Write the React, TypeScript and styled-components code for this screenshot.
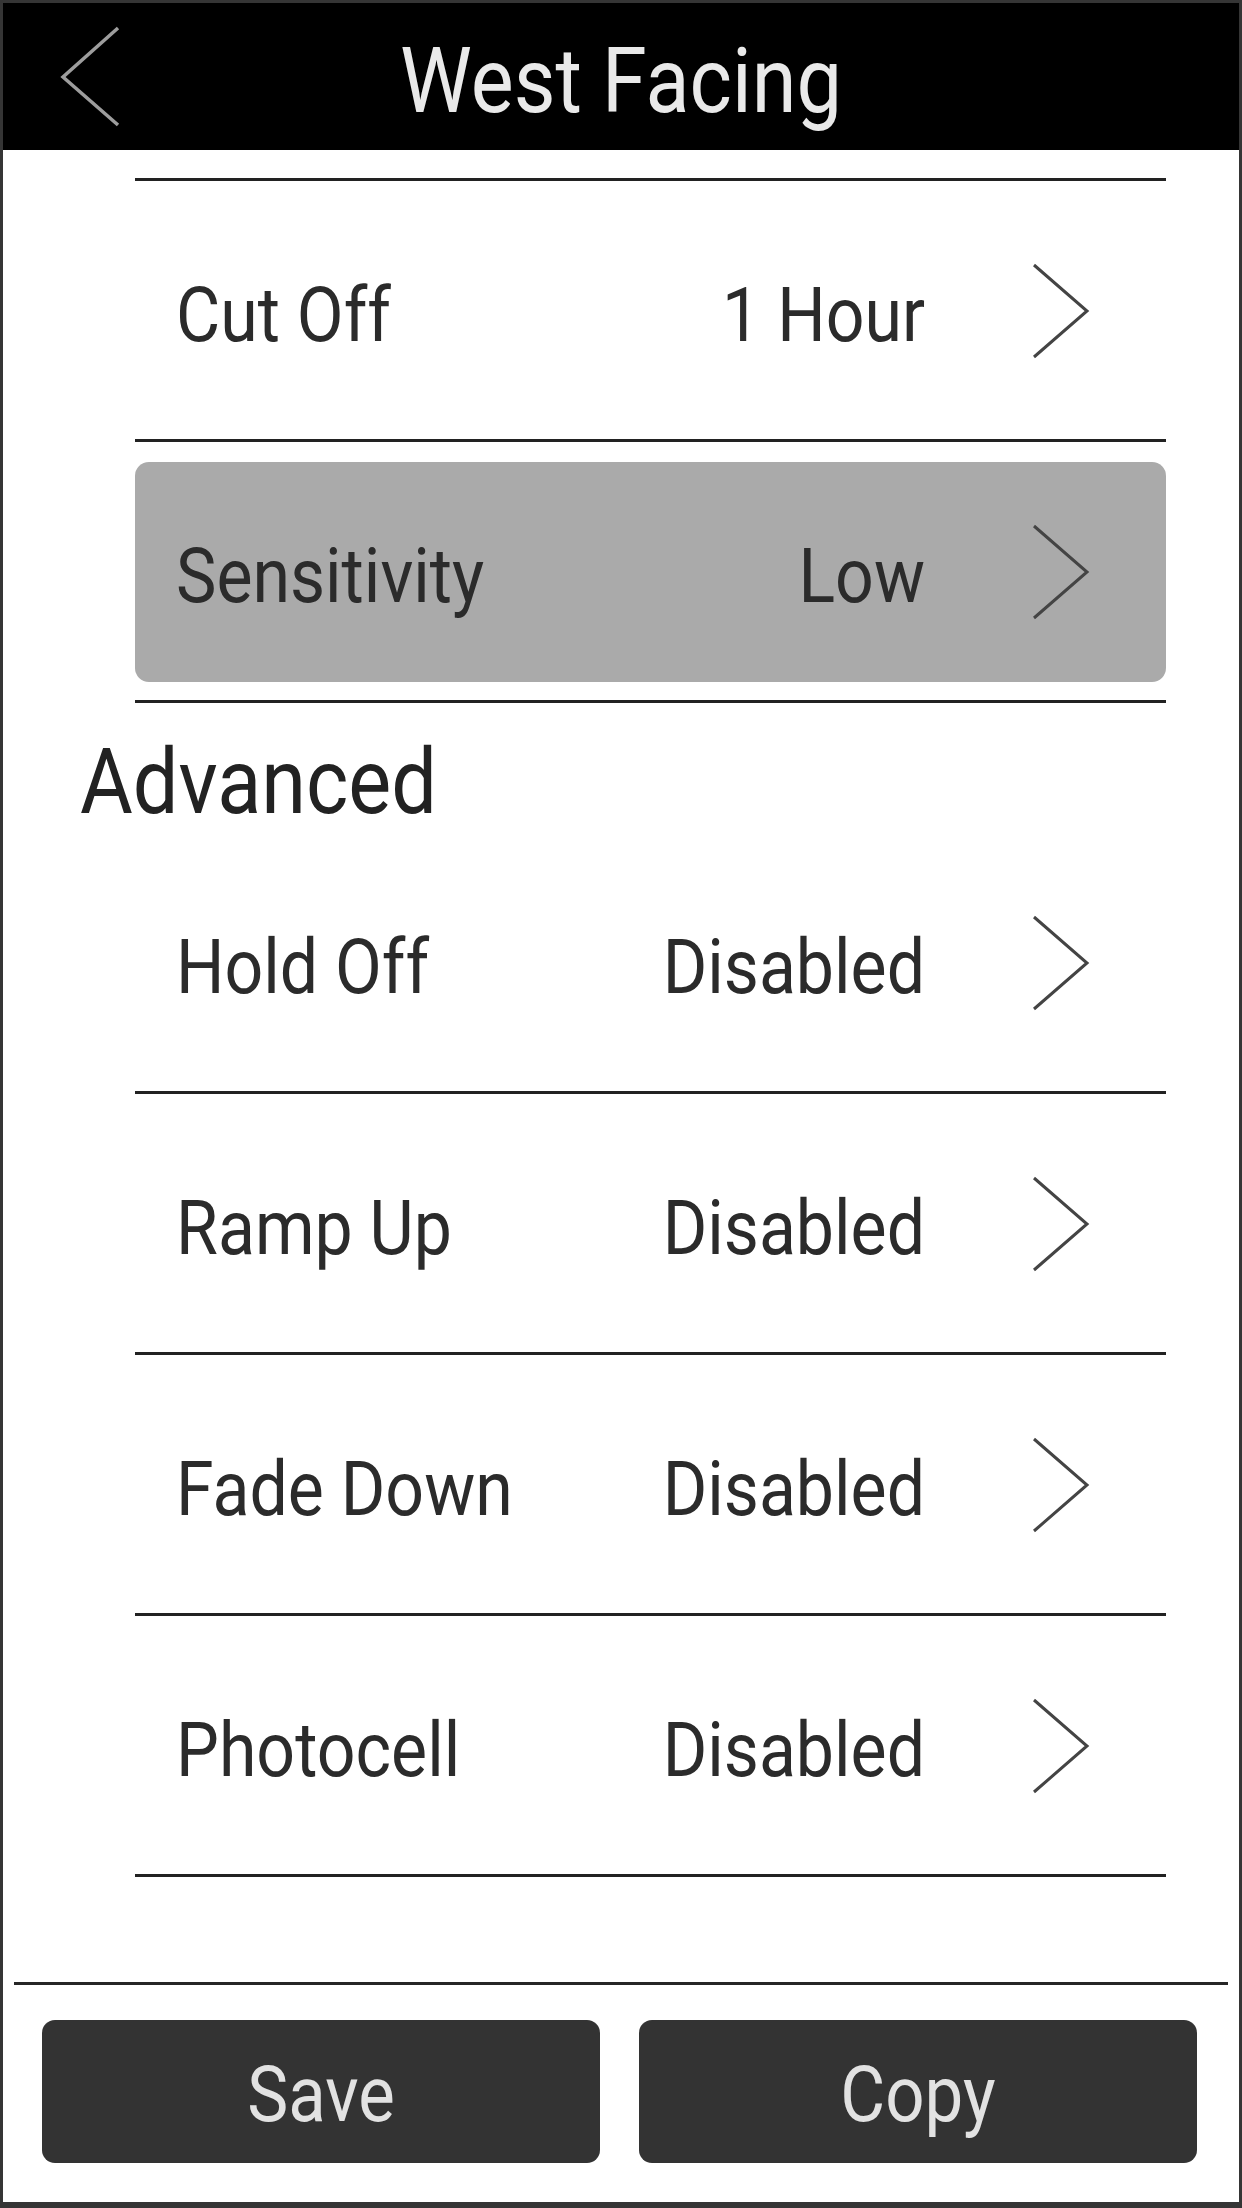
import React from 'react'
import styled, { createGlobalStyle } from 'styled-components'

const GlobalStyle = createGlobalStyle`
  html, body {
    margin: 0;
    padding: 0;
    background: #ffffff;
  }
  * {
    box-sizing: border-box;
  }
`;

const Frame = styled.div`
  display: flex;
  flex-direction: column;
  width: 1242px;
  height: 2208px;
  border: 3px solid #353535;
  border-bottom-width: 6px;
  background: #ffffff;
  font-family: Roboto, "Noto Sans", sans-serif;
  overflow: hidden;
`;

const Header = styled.header`
  position: relative;
  display: flex;
  align-items: center;
  justify-content: center;
  height: 147px;
  flex-shrink: 0;
  background: #000000;
`;

const BackButton = styled.button`
  position: absolute;
  left: 52px;
  top: 22px;
  width: 70px;
  height: 104px;
  padding: 0;
  border: none;
  background: transparent;
  cursor: pointer;
`;

const Title = styled.h1`
  margin: 10px 0 0;
  font-size: 81px;
  font-weight: 400;
  color: #e9e9e9;
  transform: scaleY(1.12);
`;

const Main = styled.main`
  flex: 1;
  display: flex;
  flex-direction: column;
`;

const List = styled.div`
  margin: 28px 73px 0 132px;
  border-top: 3px solid #222222;
`;

const Row = styled.div`
  height: 261px;
  padding: 20px 0 18px;
  border-bottom: 3px solid #222222;
`;

const RowInner = styled.div<{ $highlight?: boolean }>`
  display: flex;
  align-items: center;
  height: 100%;
  padding: 8px 76px 0 41px;
  border-radius: 14px;
  background: ${p => (p.$highlight ? '#aaaaaa' : 'transparent')};

  svg {
    margin-top: -8px;
  }
`;

const Label = styled.span`
  flex: 1;
  font-size: 68px;
  color: #2b2b2b;
  transform: scaleY(1.12);
  transform-origin: left center;
`;

const Value = styled.span`
  font-size: 68px;
  color: #2b2b2b;
  transform: scaleY(1.12);
`;

const ChevronBox = styled.span`
  display: flex;
  margin-left: 106px;
`;

const SectionHeading = styled.h2`
  height: 130px;
  margin: 0 0 0 -55px;
  padding-top: 30px;
  font-size: 81px;
  font-weight: 400;
  line-height: 96px;
  color: #222222;
  transform: scaleY(1.12);
  transform-origin: left center;
`;

const Footer = styled.footer`
  margin: 0 11px;
  border-top: 3px solid #262626;
`;

const ButtonBar = styled.div`
  display: grid;
  grid-template-columns: 1fr 1fr;
  gap: 39px;
  padding: 35px 31px 39px 28px;
`;

const ActionButton = styled.button`
  height: 143px;
  padding-top: 6px;
  border: none;
  border-radius: 13px;
  background: #333333;
  color: #e2e2e2;
  font-family: Roboto, "Noto Sans", sans-serif;
  font-size: 69px;
  cursor: pointer;

  span {
    display: inline-block;
    transform: scaleY(1.12);
  }
`;

const Chevron = () => (
  <svg width="59" height="96" viewBox="0 0 59 96">
    <polyline points="3,2 56,48 3,94" fill="none" stroke="#444444" strokeWidth="3" />
  </svg>
);

const BackChevron = () => (
  <svg width="70" height="104" viewBox="0 0 70 104">
    <polyline points="63,3 8,52 63,100" fill="none" stroke="#9d9d9d" strokeWidth="3.5" />
  </svg>
);

interface Setting {
  label: string;
  value: string;
  highlight?: boolean;
}

const basic: Setting[] = [
  { label: 'Cut Off', value: '1 Hour' },
  { label: 'Sensitivity', value: 'Low', highlight: true },
];

const advanced: Setting[] = [
  { label: 'Hold Off', value: 'Disabled' },
  { label: 'Ramp Up', value: 'Disabled' },
  { label: 'Fade Down', value: 'Disabled' },
  { label: 'Photocell', value: 'Disabled' },
];

const SettingRow: React.FC<{ setting: Setting }> = ({ setting }) => (
  <Row>
    <RowInner $highlight={setting.highlight}>
      <Label>{setting.label}</Label>
      <Value>{setting.value}</Value>
      <ChevronBox>
        <Chevron />
      </ChevronBox>
    </RowInner>
  </Row>
);

export default function App() {
  return (
    <>
      <GlobalStyle />
      <Frame>
        <Header>
          <BackButton aria-label="Back">
            <BackChevron />
          </BackButton>
          <Title>West Facing</Title>
        </Header>
        <Main>
          <List>
            {basic.map(s => <SettingRow key={s.label} setting={s} />)}
            <SectionHeading>Advanced</SectionHeading>
            {advanced.map(s => <SettingRow key={s.label} setting={s} />)}
          </List>
        </Main>
        <Footer>
          <ButtonBar>
            <ActionButton><span>Save</span></ActionButton>
            <ActionButton><span>Copy</span></ActionButton>
          </ButtonBar>
        </Footer>
      </Frame>
    </>
  );
}
